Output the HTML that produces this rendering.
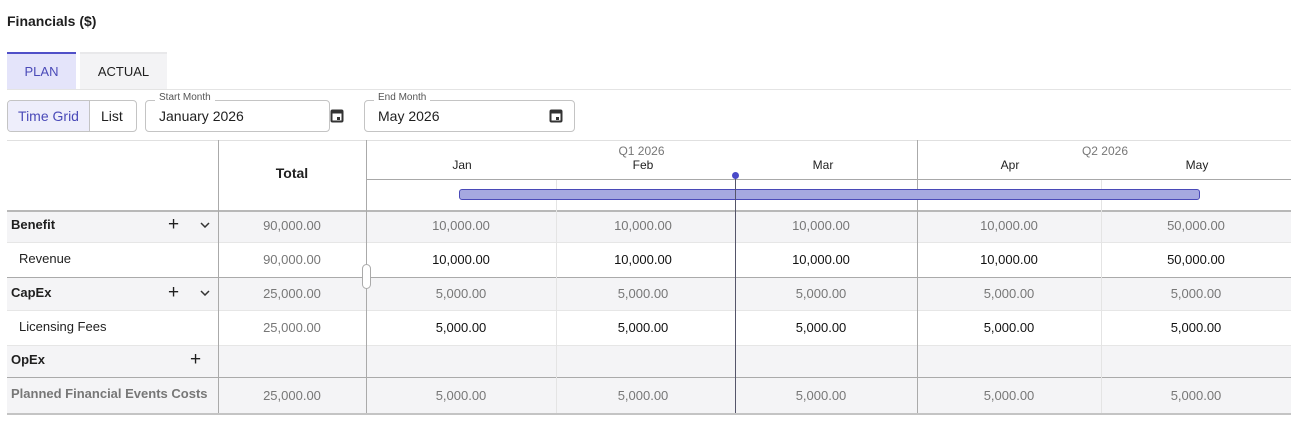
<!DOCTYPE html>
<html><head><style>
*{box-sizing:border-box;margin:0;padding:0}
body{width:1300px;height:434px;background:#fff;font-family:"Liberation Sans",Arial,sans-serif;position:relative;overflow:hidden;color:#1f1f1f}
.a{position:absolute}
.c{position:absolute;text-align:center;font-size:13px}
.r{position:absolute;left:7px;width:1284px}
.hl{position:absolute;height:1px}
.vl{position:absolute;width:1px}
</style></head><body>
<div class="a" style="left:7px;top:13px;font-size:14px;font-weight:bold">Financials ($)</div>
<div class="a" style="left:7px;top:52px;width:69px;height:37px;background:#e4e4fa;border-top:2px solid #5050c8;color:#4a4ab8;font-size:13px;text-align:center;line-height:36px">PLAN</div>
<div class="a" style="left:80px;top:52px;width:87px;height:37px;background:#f3f3f5;border-top:2px solid #e8e8ea;font-size:13px;text-align:center;line-height:36px">ACTUAL</div>
<div class="hl" style="left:7px;top:89px;width:1284px;background:#e4e4e4"></div>
<div class="a" style="left:7px;top:100px;width:130px;height:32px;border:1px solid #c4c4c4;border-radius:4px"></div>
<div class="a" style="left:8px;top:101px;width:82px;height:30px;background:#eeeefb;border-right:1px solid #c4c4c4;border-radius:3px 0 0 3px;color:#4a4ab8;font-size:14px;line-height:30px;text-align:center">Time Grid</div>
<div class="a" style="left:101px;top:108px;font-size:14px">List</div>
<div class="a" style="left:145px;top:100px;width:185px;height:32px;border:1px solid #c4c4c4;border-radius:4px"></div>
<div class="a" style="left:155px;top:92px;background:#fff;padding:0 4px;font-size:10px;color:#555">Start Month</div>
<div class="a" style="left:159px;top:108px;font-size:14px">January 2026</div>
<div class="a" style="left:364px;top:100px;width:211px;height:32px;border:1px solid #c4c4c4;border-radius:4px"></div>
<div class="a" style="left:374px;top:92px;background:#fff;padding:0 4px;font-size:10px;color:#555">End Month</div>
<div class="a" style="left:378px;top:108px;font-size:14px">May 2026</div>
<svg class="a" style="left:330px;top:108px" width="14" height="15" viewBox="0 0 14 15"><rect x="1.5" y="2.5" width="11" height="11" rx="1" fill="none" stroke="#333" stroke-width="2"/><rect x="1.5" y="2.5" width="11" height="3" fill="#333"/><rect x="7" y="9" width="3" height="3" fill="#333"/></svg>
<svg class="a" style="left:549px;top:108px" width="14" height="15" viewBox="0 0 14 15"><rect x="1.5" y="2.5" width="11" height="11" rx="1" fill="none" stroke="#333" stroke-width="2"/><rect x="1.5" y="2.5" width="11" height="3" fill="#333"/><rect x="7" y="9" width="3" height="3" fill="#333"/></svg>
<div class="hl" style="left:7px;top:140px;width:1284px;background:#e0e0e0"></div>
<div class="r" style="top:210px;height:32px;background:#f4f4f6"></div>
<div class="r" style="top:277px;height:33px;background:#f4f4f6"></div>
<div class="r" style="top:345px;height:68px;background:#f4f4f6"></div>
<div class="hl" style="left:366px;top:179px;width:925px;background:#a8a8a8"></div>
<div class="hl" style="left:7px;top:210px;width:1284px;height:2px;background:#b8b8b8"></div>
<div class="hl" style="left:7px;top:242px;width:1284px;background:#e6e6e6"></div>
<div class="hl" style="left:7px;top:277px;width:1284px;background:#aaa"></div>
<div class="hl" style="left:7px;top:310px;width:1284px;background:#e6e6e6"></div>
<div class="hl" style="left:7px;top:345px;width:1284px;background:#e6e6e6"></div>
<div class="hl" style="left:7px;top:377px;width:1284px;background:#aaa"></div>
<div class="hl" style="left:7px;top:413px;width:1284px;height:2px;background:#c4c4c4"></div>
<div class="vl" style="left:218px;top:140px;height:273px;background:#aaa"></div>
<div class="vl" style="left:366px;top:140px;height:273px;background:#aaa"></div>
<div class="vl" style="left:917px;top:140px;height:273px;background:#aaa"></div>
<div class="vl" style="left:556px;top:180px;height:233px;background:#e4e4e4"></div>
<div class="vl" style="left:1101px;top:180px;height:233px;background:#e4e4e4"></div>
<div class="a" style="left:218px;top:165px;width:148px;text-align:center;font-size:14px;font-weight:bold">Total</div>
<div class="c" style="left:556px;top:144px;width:171px;color:#777;font-size:12px">Q1 2026</div>
<div class="c" style="left:1010px;top:144px;width:190px;color:#777;font-size:12px">Q2 2026</div>
<div class="c" style="left:412px;top:158px;width:100px;font-size:12px">Jan</div>
<div class="c" style="left:593px;top:158px;width:100px;font-size:12px">Feb</div>
<div class="c" style="left:773px;top:158px;width:100px;font-size:12px">Mar</div>
<div class="c" style="left:960px;top:158px;width:100px;font-size:12px">Apr</div>
<div class="c" style="left:1147px;top:158px;width:100px;font-size:12px">May</div>
<div class="a" style="left:459px;top:189px;width:741px;height:11px;background:#a5a8e0;border:1px solid #4a4ab8;border-radius:3px"></div>
<div class="vl" style="left:735px;top:175px;height:238px;background:#55556a"></div>
<div class="a" style="left:732px;top:172px;width:7px;height:7px;border-radius:50%;background:#4a4ac8"></div>
<div class="a" style="left:362px;top:264px;width:9px;height:25px;border:1px solid #aaa;border-radius:5px;background:#fff"></div>
<div class="a" style="left:11px;top:217px;font-size:13px;font-weight:bold">Benefit</div>
<div class="a" style="left:19px;top:251px;font-size:13px">Revenue</div>
<div class="a" style="left:11px;top:285px;font-size:13px;font-weight:bold">CapEx</div>
<div class="a" style="left:19px;top:319px;font-size:13px">Licensing Fees</div>
<div class="a" style="left:11px;top:352px;font-size:13px;font-weight:bold">OpEx</div>
<div class="a" style="left:11px;top:386px;font-size:13px;font-weight:bold;color:#777">Planned Financial Events Costs</div>
<div class="a" style="left:168px;top:214px;font-size:19px">+</div>
<div class="a" style="left:168px;top:282px;font-size:19px">+</div>
<div class="a" style="left:190px;top:349px;font-size:19px">+</div>
<svg class="a" style="left:200px;top:222px" width="10" height="6"><path d="M1 1l4 4 4-4" fill="none" stroke="#333" stroke-width="1.5"/></svg>
<svg class="a" style="left:200px;top:290px" width="10" height="6"><path d="M1 1l4 4 4-4" fill="none" stroke="#333" stroke-width="1.5"/></svg>
<div style="position:absolute;top:218px;left:0;font-size:13px;color:#777">
<div class="c" style="left:218px;width:148px">90,000.00</div><div class="c" style="left:366px;width:190px">10,000.00</div><div class="c" style="left:556px;width:174px">10,000.00</div><div class="c" style="left:730px;width:182px">10,000.00</div><div class="c" style="left:917px;width:184px">10,000.00</div><div class="c" style="left:1101px;width:190px">50,000.00</div></div>
<div style="position:absolute;top:252px;left:0;font-size:13px;color:#111">
<div class="c" style="left:218px;width:148px;color:#777">90,000.00</div><div class="c" style="left:366px;width:190px">10,000.00</div><div class="c" style="left:556px;width:174px">10,000.00</div><div class="c" style="left:730px;width:182px">10,000.00</div><div class="c" style="left:917px;width:184px">10,000.00</div><div class="c" style="left:1101px;width:190px">50,000.00</div></div>
<div style="position:absolute;top:286px;left:0;font-size:13px;color:#777">
<div class="c" style="left:218px;width:148px">25,000.00</div><div class="c" style="left:366px;width:190px">5,000.00</div><div class="c" style="left:556px;width:174px">5,000.00</div><div class="c" style="left:730px;width:182px">5,000.00</div><div class="c" style="left:917px;width:184px">5,000.00</div><div class="c" style="left:1101px;width:190px">5,000.00</div></div>
<div style="position:absolute;top:320px;left:0;font-size:13px;color:#111">
<div class="c" style="left:218px;width:148px;color:#777">25,000.00</div><div class="c" style="left:366px;width:190px">5,000.00</div><div class="c" style="left:556px;width:174px">5,000.00</div><div class="c" style="left:730px;width:182px">5,000.00</div><div class="c" style="left:917px;width:184px">5,000.00</div><div class="c" style="left:1101px;width:190px">5,000.00</div></div>
<div style="position:absolute;top:388px;left:0;font-size:13px;color:#777">
<div class="c" style="left:218px;width:148px">25,000.00</div><div class="c" style="left:366px;width:190px">5,000.00</div><div class="c" style="left:556px;width:174px">5,000.00</div><div class="c" style="left:730px;width:182px">5,000.00</div><div class="c" style="left:917px;width:184px">5,000.00</div><div class="c" style="left:1101px;width:190px">5,000.00</div></div>
</body></html>
